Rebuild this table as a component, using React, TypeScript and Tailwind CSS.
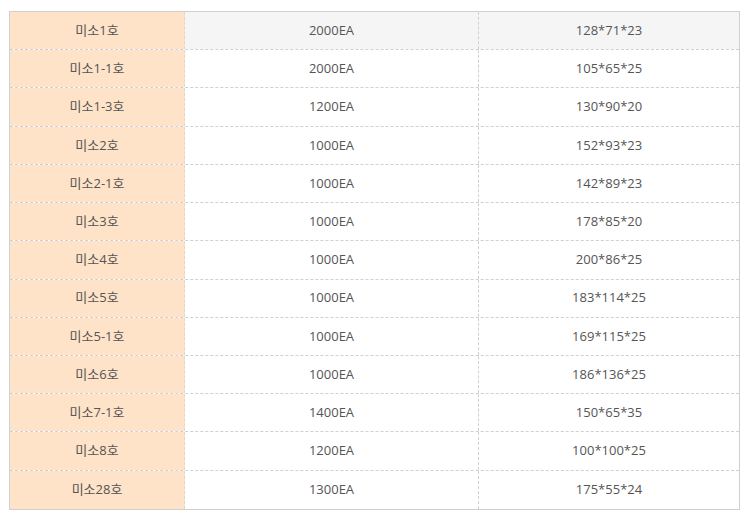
const rows: [string, string, string][] = [
  ['미소1호', '2000EA', '128*71*23'],
  ['미소1-1호', '2000EA', '105*65*25'],
  ['미소1-3호', '1200EA', '130*90*20'],
  ['미소2호', '1000EA', '152*93*23'],
  ['미소2-1호', '1000EA', '142*89*23'],
  ['미소3호', '1000EA', '178*85*20'],
  ['미소4호', '1000EA', '200*86*25'],
  ['미소5호', '1000EA', '183*114*25'],
  ['미소5-1호', '1000EA', '169*115*25'],
  ['미소6호', '1000EA', '186*136*25'],
  ['미소7-1호', '1400EA', '150*65*35'],
  ['미소8호', '1200EA', '100*100*25'],
  ['미소28호', '1300EA', '175*55*24'],
];

export default function App() {
  return (
    <div
      className="min-h-[524px] bg-white pl-[9px] pt-[11px] text-[13px] text-[#555]"
      style={{ fontFamily: '"Open Sans", "Noto Sans CJK KR", sans-serif' }}
    >
      <div className="w-[731px] border border-[#cfcfcf]">
        {rows.map(([name, qty, size], i) => {
          const last = i === rows.length - 1;
          return (
            <div
              key={name}
              className={`grid h-[38.23px] grid-cols-[175px_294px_1fr] ${last ? '' : 'border-b border-dashed border-[#d0d0d0]'}`}
            >
              <div className="flex items-center justify-center border-r border-dashed border-[#e2d6c8] bg-[#fee3c9]">
                {name}
              </div>
              <div
                className={`flex items-center justify-center border-r border-dashed border-[#d0d0d0] ${i === 0 ? 'bg-[#f5f5f5]' : 'bg-white'}`}
              >
                {qty}
              </div>
              <div className={`flex items-center justify-center ${i === 0 ? 'bg-[#f5f5f5]' : 'bg-white'}`}>
                {size}
              </div>
            </div>
          );
        })}
      </div>
    </div>
  );
}
